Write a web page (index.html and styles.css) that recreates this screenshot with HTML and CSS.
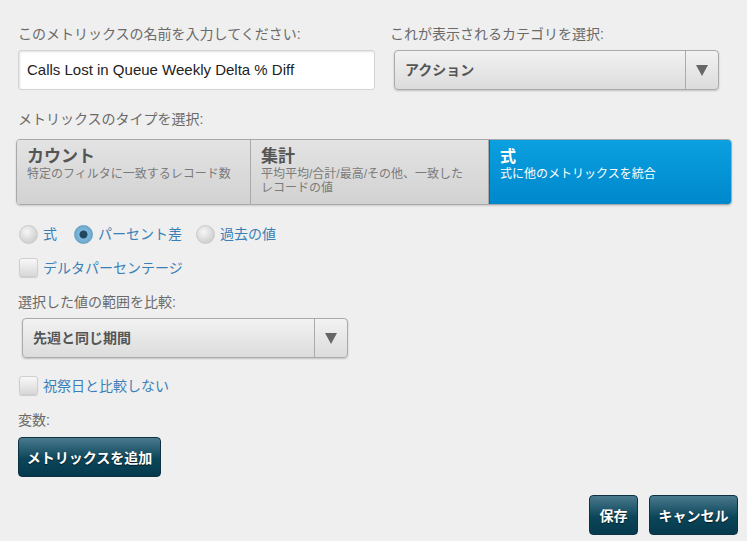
FILE: index.html
```html
<!DOCTYPE html>
<html lang="ja">
<head>
<meta charset="utf-8">
<link rel="stylesheet" href="styles.css">
</head>
<body>
<div class="page">
  <div class="top-row">
    <div class="field name-field">
      <label class="lbl">このメトリックスの名前を入力してください:</label>
      <div class="text-input">Calls Lost in Queue Weekly Delta % Diff</div>
    </div>
    <div class="field cat-field">
      <label class="lbl">これが表示されるカテゴリを選択:</label>
      <div class="select cat-select">
        <span class="select-value">アクション</span>
        <span class="select-arrow"><span class="tri"></span></span>
      </div>
    </div>
  </div>

  <div class="lbl type-lbl">メトリックスのタイプを選択:</div>
  <div class="types">
    <div class="type">
      <div class="type-title">カウント</div>
      <div class="type-desc">特定のフィルタに一致するレコード数</div>
    </div>
    <div class="type">
      <div class="type-title">集計</div>
      <div class="type-desc">平均平均/合計/最高/その他、一致した<br>レコードの値</div>
    </div>
    <div class="type active">
      <div class="type-title">式</div>
      <div class="type-desc">式に他のメトリックスを統合</div>
    </div>
  </div>

  <div class="radios">
    <div class="radio-item"><span class="radio"></span><span class="opt">式</span></div>
    <div class="radio-item"><span class="radio checked"></span><span class="opt">パーセント差</span></div>
    <div class="radio-item"><span class="radio"></span><span class="opt">過去の値</span></div>
  </div>

  <div class="check-item delta"><span class="check"></span><span class="opt">デルタパーセンテージ</span></div>

  <div class="lbl range-lbl">選択した値の範囲を比較:</div>
  <div class="select range-select">
    <span class="select-value">先週と同じ期間</span>
    <span class="select-arrow"><span class="tri"></span></span>
  </div>

  <div class="check-item holiday"><span class="check"></span><span class="opt">祝祭日と比較しない</span></div>

  <div class="lbl var-lbl">変数:</div>
  <button class="btn add-btn">メトリックスを追加</button>

  <div class="footer">
    <button class="btn save-btn">保存</button>
    <button class="btn cancel-btn">キャンセル</button>
  </div>
</div>
</body>
</html>
```
FILE: styles.css
```css
* { box-sizing: border-box; }
html, body { margin: 0; padding: 0; background: #efefef; }
body {
  font-family: "Liberation Sans", "Noto Sans CJK JP", sans-serif;
  color: #666;
  width: 747px;
  height: 541px;
  overflow: hidden;
}
.page {
  padding: 25px 15px 0 18px;
  display: flex;
  flex-direction: column;
}
.lbl {
  font-size: 14px;
  line-height: 18px;
  color: #6a6a6a;
  display: block;
}
.top-row {
  display: flex;
  gap: 15px;
}
.name-field { width: 357px; }
.cat-field { width: 342px; }
.text-input {
  margin-top: 7px;
  height: 40px;
  background: #fff;
  border: 1px solid #d4d4d4;
  border-radius: 3px;
  box-shadow: inset 1px 1px 2px rgba(0,0,0,0.12);
  font-size: 15px;
  line-height: 38px;
  padding-left: 8px;
  color: #222;
}
.select {
  display: flex;
  height: 40px;
  border: 1px solid #aaa;
  border-radius: 4px;
  background: linear-gradient(#f2f2f2, #dcdcdc);
  box-shadow: 0 1px 2px rgba(0,0,0,0.2);
}
.cat-select { margin-top: 7px; margin-left: 4px; width: 325px; }
.select-value {
  flex: 1;
  font-size: 14px;
  font-weight: bold;
  color: #555;
  line-height: 38px;
  padding-left: 10px;
}
.select-arrow {
  width: 33px;
  border-left: 1px solid #aaa;
  display: flex;
  align-items: center;
  justify-content: center;
}
.tri {
  width: 0; height: 0;
  border-left: 6px solid transparent;
  border-right: 6px solid transparent;
  border-top: 11px solid #666;
}
.type-lbl { margin-top: 20px; }
.types {
  margin-top: 11px;
  margin-left: -2px;
  width: 716px;
  height: 66px;
  display: grid;
  grid-template-columns: 234px 238px 1fr;
  border: 1px solid #a9a9a9;
  border-radius: 4px;
  overflow: hidden;
  box-shadow: 0 1px 2px rgba(0,0,0,0.15);
}
.type {
  background: linear-gradient(#e3e3e3, #d2d2d2);
  padding: 7px 0 0 10px;
  border-right: 1px solid #a9a9a9;
}
.type-title {
  font-size: 17px;
  font-weight: bold;
  line-height: 20px;
  color: #555;
}
.type-desc {
  font-size: 12px;
  line-height: 14px;
  color: #7a7a7a;
}
.type.active {
  background: linear-gradient(#0aa0e0, #0088cc);
  border-right: none;
  border-left: 1px solid #0070a8;
}
.type.active .type-title,
.type.active .type-desc { color: #fff; }
.type.active .type-title { font-size: 16px; }

.radios {
  margin-top: 19px;
  display: flex;
  gap: 16px;
  height: 20px;
  align-items: center;
}
.radio-item, .check-item {
  display: flex;
  align-items: center;
  gap: 5px;
}
.opt {
  font-size: 14px;
  color: #3a80b8;
  line-height: 18px;
}
.radio {
  width: 19px;
  height: 19px;
  border-radius: 50%;
  background: radial-gradient(circle at 40% 35%, #f6f6f6, #cfcfcf 75%);
  border: 1px solid #cacaca;
  margin-left: 1px;
}
.radio.checked {
  background: radial-gradient(circle, #23475e 0 3.5px, #7fb8dc 4.5px, #6aa6cc 9px);
  border-color: #6a9fc2;
}
.radios .radio-item:nth-child(3) { margin-left: -3px; }
.check {
  width: 19px;
  height: 19px;
  border-radius: 3px;
  background: linear-gradient(#f8f8f8, #d8d8d8);
  border: 1px solid #cfcfcf;
  box-shadow: 0 1px 1px rgba(0,0,0,0.15);
  margin-left: 1px;
}
.delta { margin-top: 14px; }
.range-lbl { margin-top: 16px; }
.range-select { margin-top: 7px; margin-left: 4px; width: 326px; }
.range-select .select-value { color: #555; }
.holiday { margin-top: 18px; }
.var-lbl { margin-top: 16px; }
.btn {
  font-family: "Liberation Sans", "Noto Sans CJK JP", sans-serif;
  font-weight: bold;
  font-size: 14px;
  color: #fff;
  border: 1px solid #0d3342;
  border-radius: 4px;
  background: linear-gradient(#4a7a8e, #0c4559 55%, #053a4d);
  text-shadow: 0 1px 1px rgba(0,0,0,0.6);
  height: 40px;
  padding: 0;
  cursor: pointer;
}
.add-btn {
  margin-top: 8px;
  width: 143px;
  align-self: flex-start;
}
.footer {
  margin-top: 18px;
  display: flex;
  justify-content: flex-end;
  gap: 11px;
  padding-right: 0;
}
.save-btn { width: 49px; }
.cancel-btn { width: 89px; margin-right: -6px; }
```
